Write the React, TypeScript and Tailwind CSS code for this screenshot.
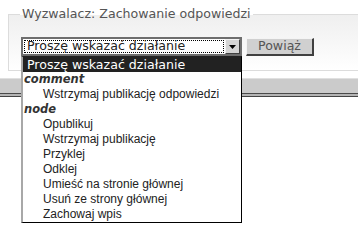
import React from "react";

type Row = { kind: "sel" | "group" | "item"; label: string };

const rows: Row[] = [
  { kind: "sel", label: "Proszę wskazać działanie" },
  { kind: "group", label: "comment" },
  { kind: "item", label: "Wstrzymaj publikację odpowiedzi" },
  { kind: "group", label: "node" },
  { kind: "item", label: "Opublikuj" },
  { kind: "item", label: "Wstrzymaj publikację" },
  { kind: "item", label: "Przyklej" },
  { kind: "item", label: "Odklej" },
  { kind: "item", label: "Umieść na stronie głównej" },
  { kind: "item", label: "Usuń ze strony głównej" },
  { kind: "item", label: "Zachowaj wpis" },
];

export default function App() {
  return (
    <div className="relative w-[358px] h-[228px] overflow-hidden bg-white font-[DejaVu_Sans]">
      <fieldset className="ml-[8px] mt-[6px] w-[400px] border border-[#dcdcdc] bg-linear-to-b from-[#efefef] to-white pl-[12px] pt-[15px] pb-[14px]">
        <legend className="ml-[-1px] px-[2px] h-[16px] leading-[16px] text-[12.6px] text-[#555]">
          Wyzwalacz: Zachowanie odpowiedzi
        </legend>
        <div className="flex items-start">
          <div className="relative w-[221px]">
            <div className="flex h-[19px] w-[221px] border-2 border-[#6e6e6e] bg-white">
              <div className="m-[1px] flex h-[13px] flex-1 items-center border border-dotted border-black pl-[2px]">
                <span className="text-[12.6px] leading-none text-[#222] whitespace-nowrap">
                  Proszę wskazać działanie
                </span>
              </div>
              <div className="flex h-[15px] w-[15px] items-center justify-center border border-t-[#f4f4f4] border-l-[#f4f4f4] border-b-[#404040] border-r-[#404040] bg-[#d4d4d4]">
                <svg width="7" height="4" viewBox="0 0 7 4">
                  <polygon points="0,0 7,0 3.5,4" fill="#000" />
                </svg>
              </div>
            </div>
            <div className="absolute left-0 top-[19px] z-10 w-[221px] border-t border-t-[#222] border-l-2 border-l-[#a8a8a8] border-r border-r-black border-b border-b-black bg-white">
              {rows.map((r, i) => {
                if (r.kind === "sel") {
                  return (
                    <div
                      key={i}
                      className="h-[15px] bg-[#222] pl-[4px] text-[12.6px] leading-[15px] text-white whitespace-nowrap"
                    >
                      {r.label}
                    </div>
                  );
                }
                if (r.kind === "group") {
                  return (
                    <div
                      key={i}
                      className="h-[15px] pl-[1px] text-[11.5px] font-bold italic leading-[15px] text-[#333]"
                    >
                      {r.label}
                    </div>
                  );
                }
                return (
                  <div
                    key={i}
                    className="h-[15px] pl-5 text-[12px] leading-[15px] text-[#222] whitespace-nowrap font-[Liberation_Sans]"
                  >
                    {r.label}
                  </div>
                );
              })}
            </div>
          </div>
          <button className="ml-[4px] mt-[1px] h-[18px] w-[68px] border border-t-[#f4f4f4] border-l-[#f4f4f4] border-b-2 border-r-2 border-b-[#404040] border-r-[#404040] bg-[#d0d0d0] text-[12.6px] leading-none text-[#555]">
            Powiąż
          </button>
        </div>
      </fieldset>
      <div className="mt-[7px]">
        <div className="h-[1px] bg-[#e0e0e0]" />
        <div className="h-[14px] bg-[#cbcbcb]" />
        <div className="h-[1px] bg-[#4a4a4a]" />
        <div className="h-[2px] bg-[#b4b4b4]" />
        <div className="h-[1px] bg-[#444]" />
      </div>
    </div>
  );
}
